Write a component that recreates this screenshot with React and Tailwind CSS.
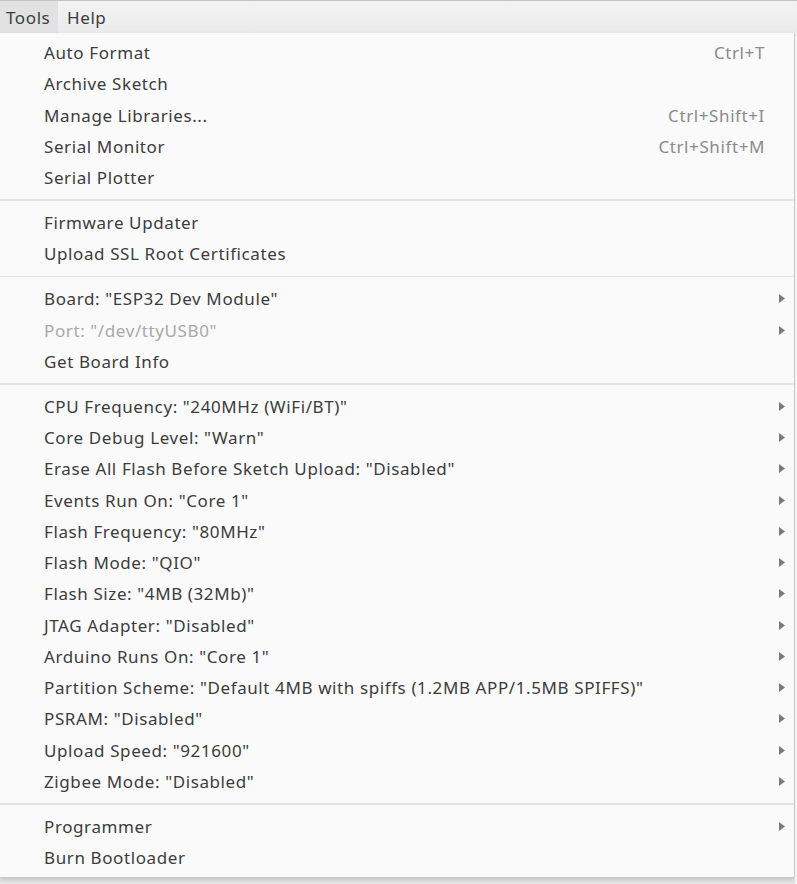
import React from "react";

const groups = [
  [
    { label: "Auto Format", shortcut: "Ctrl+T" },
    { label: "Archive Sketch" },
    { label: "Manage Libraries...", shortcut: "Ctrl+Shift+I" },
    { label: "Serial Monitor", shortcut: "Ctrl+Shift+M" },
    { label: "Serial Plotter" },
  ],
  [{ label: "Firmware Updater" }, { label: "Upload SSL Root Certificates" }],
  [
    { label: 'Board: "ESP32 Dev Module"', sub: true },
    { label: 'Port: "/dev/ttyUSB0"', sub: true, disabled: true },
    { label: "Get Board Info" },
  ],
  [
    { label: 'CPU Frequency: "240MHz (WiFi/BT)"', sub: true },
    { label: 'Core Debug Level: "Warn"', sub: true },
    { label: 'Erase All Flash Before Sketch Upload: "Disabled"', sub: true },
    { label: 'Events Run On: "Core 1"', sub: true },
    { label: 'Flash Frequency: "80MHz"', sub: true },
    { label: 'Flash Mode: "QIO"', sub: true },
    { label: 'Flash Size: "4MB (32Mb)"', sub: true },
    { label: 'JTAG Adapter: "Disabled"', sub: true },
    { label: 'Arduino Runs On: "Core 1"', sub: true },
    { label: 'Partition Scheme: "Default 4MB with spiffs (1.2MB APP/1.5MB SPIFFS)"', sub: true },
    { label: 'PSRAM: "Disabled"', sub: true },
    { label: 'Upload Speed: "921600"', sub: true },
    { label: 'Zigbee Mode: "Disabled"', sub: true },
  ],
  [{ label: "Programmer", sub: true }, { label: "Burn Bootloader" }],
];

function Arrow() {
  return (
    <svg width="6" height="9" viewBox="0 0 6 9" className="block">
      <path d="M0 0 L6 4.5 L0 9 Z" fill="#7a7a7a" />
    </svg>
  );
}

function Item({ label, shortcut, sub, disabled }) {
  return (
    <div className="flex h-[31.25px] items-center pl-[44px] pr-[9px] leading-none">
      <span className={disabled ? "flex-1 text-[#a8a8a8]" : "flex-1 text-[#3c3c3c]"}>{label}</span>
      {shortcut && <span className="mr-[20px] text-[#8a8a8a]">{shortcut}</span>}
      {sub && <Arrow />}
    </div>
  );
}

export default function App() {
  return (
    <div
      className="relative h-[884px] w-[797px] overflow-hidden bg-[#e6e6e6] text-[17px] tracking-[0.6px]"
      style={{ fontFamily: '"Noto Sans", "Open Sans", sans-serif' }}
    >
      <div className="flex h-[33px] items-stretch border-t border-[#c4c4c4] bg-gradient-to-b from-[#f3f3f3] to-[#ebebeb] leading-none">
        <div className="flex w-[58px] items-center bg-[#e2e2e2] pl-[6px] text-[#3c3c3c]">Tools</div>
        <div className="flex items-center pl-[9px] text-[#3c3c3c]">Help</div>
      </div>
      <div className="flex h-[851px]">
        <div className="flex w-[795px] flex-col">
          <div className="h-[845px] border-r border-b border-[#c8c8c8] bg-[#fafafa] pt-[4px] shadow-[0_2px_4px_rgba(0,0,0,0.15)]">
            {groups.map((g, gi) => (
              <div key={gi}>
                {gi > 0 && <div className="my-[6px] h-[1.75px] bg-[#e3e3e3]" />}
                {g.map((it, i) => (
                  <Item key={i} {...it} />
                ))}
              </div>
            ))}
          </div>
        </div>
        <div className="flex-1 bg-[#f4f4f4]" />
      </div>
    </div>
  );
}
